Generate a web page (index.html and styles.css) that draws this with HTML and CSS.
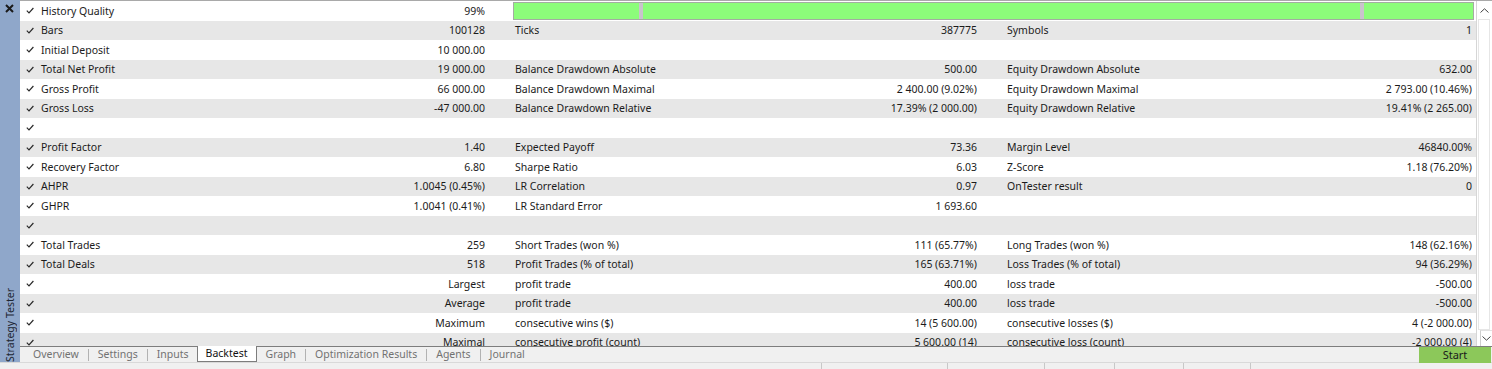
FILE: index.html
```html
<!DOCTYPE html>
<html lang="en">
<head>
    <meta charset="UTF-8">
    <title>Strategy Tester - Backtest</title>
    <link rel="stylesheet" href="styles.css">
</head>
<body>
    <div class="window">
        <div class="sidebar">
            <svg class="close" width="9" height="9" viewBox="0 0 9 9"><path d="M1 1 L8 8 M8 1 L1 8" stroke="#1a1a1a" stroke-width="2"/></svg>
            <span class="side-title">Strategy Tester</span>
        </div>
        <div class="panel">
            <div class="report">
                <div class="table">
                    <div class="row">
                        <span class="check"><svg width="8" height="7" viewBox="0 0 8 7"><path d="M0.8 3.6 L3 5.8 L7.4 1" /></svg></span>
                        <span class="cell"><span>History Quality</span><span>99%</span></span>
                        <span class="quality">
                            <span class="seg" style="width:125px"></span>
                            <span class="gap"></span>
                            <span class="seg" style="width:717px"></span>
                            <span class="gap"></span>
                            <span class="seg fill"></span>
                        </span>
                    </div>
                    <div class="row">
                        <span class="check"><svg width="8" height="7" viewBox="0 0 8 7"><path d="M0.8 3.6 L3 5.8 L7.4 1" /></svg></span>
                        <span class="cell"><span>Bars</span><span>100128</span></span><span></span>
                        <span class="cell"><span>Ticks</span><span>387775</span></span><span></span>
                        <span class="cell"><span>Symbols</span><span>1</span></span>
                    </div>
                    <div class="row">
                        <span class="check"><svg width="8" height="7" viewBox="0 0 8 7"><path d="M0.8 3.6 L3 5.8 L7.4 1" /></svg></span>
                        <span class="cell"><span>Initial Deposit</span><span>10 000.00</span></span><span></span>
                        <span class="cell"></span><span></span>
                        <span class="cell"></span>
                    </div>
                    <div class="row">
                        <span class="check"><svg width="8" height="7" viewBox="0 0 8 7"><path d="M0.8 3.6 L3 5.8 L7.4 1" /></svg></span>
                        <span class="cell"><span>Total Net Profit</span><span>19 000.00</span></span><span></span>
                        <span class="cell"><span>Balance Drawdown Absolute</span><span>500.00</span></span><span></span>
                        <span class="cell"><span>Equity Drawdown Absolute</span><span>632.00</span></span>
                    </div>
                    <div class="row">
                        <span class="check"><svg width="8" height="7" viewBox="0 0 8 7"><path d="M0.8 3.6 L3 5.8 L7.4 1" /></svg></span>
                        <span class="cell"><span>Gross Profit</span><span>66 000.00</span></span><span></span>
                        <span class="cell"><span>Balance Drawdown Maximal</span><span>2 400.00 (9.02%)</span></span><span></span>
                        <span class="cell"><span>Equity Drawdown Maximal</span><span>2 793.00 (10.46%)</span></span>
                    </div>
                    <div class="row">
                        <span class="check"><svg width="8" height="7" viewBox="0 0 8 7"><path d="M0.8 3.6 L3 5.8 L7.4 1" /></svg></span>
                        <span class="cell"><span>Gross Loss</span><span>-47 000.00</span></span><span></span>
                        <span class="cell"><span>Balance Drawdown Relative</span><span>17.39% (2 000.00)</span></span><span></span>
                        <span class="cell"><span>Equity Drawdown Relative</span><span>19.41% (2 265.00)</span></span>
                    </div>
                    <div class="row">
                        <span class="check"><svg width="8" height="7" viewBox="0 0 8 7"><path d="M0.8 3.6 L3 5.8 L7.4 1" /></svg></span>
                    </div>
                    <div class="row">
                        <span class="check"><svg width="8" height="7" viewBox="0 0 8 7"><path d="M0.8 3.6 L3 5.8 L7.4 1" /></svg></span>
                        <span class="cell"><span>Profit Factor</span><span>1.40</span></span><span></span>
                        <span class="cell"><span>Expected Payoff</span><span>73.36</span></span><span></span>
                        <span class="cell"><span>Margin Level</span><span>46840.00%</span></span>
                    </div>
                    <div class="row">
                        <span class="check"><svg width="8" height="7" viewBox="0 0 8 7"><path d="M0.8 3.6 L3 5.8 L7.4 1" /></svg></span>
                        <span class="cell"><span>Recovery Factor</span><span>6.80</span></span><span></span>
                        <span class="cell"><span>Sharpe Ratio</span><span>6.03</span></span><span></span>
                        <span class="cell"><span>Z-Score</span><span>1.18 (76.20%)</span></span>
                    </div>
                    <div class="row">
                        <span class="check"><svg width="8" height="7" viewBox="0 0 8 7"><path d="M0.8 3.6 L3 5.8 L7.4 1" /></svg></span>
                        <span class="cell"><span>AHPR</span><span>1.0045 (0.45%)</span></span><span></span>
                        <span class="cell"><span>LR Correlation</span><span>0.97</span></span><span></span>
                        <span class="cell"><span>OnTester result</span><span>0</span></span>
                    </div>
                    <div class="row">
                        <span class="check"><svg width="8" height="7" viewBox="0 0 8 7"><path d="M0.8 3.6 L3 5.8 L7.4 1" /></svg></span>
                        <span class="cell"><span>GHPR</span><span>1.0041 (0.41%)</span></span><span></span>
                        <span class="cell"><span>LR Standard Error</span><span>1 693.60</span></span><span></span>
                        <span class="cell"></span>
                    </div>
                    <div class="row">
                        <span class="check"><svg width="8" height="7" viewBox="0 0 8 7"><path d="M0.8 3.6 L3 5.8 L7.4 1" /></svg></span>
                    </div>
                    <div class="row">
                        <span class="check"><svg width="8" height="7" viewBox="0 0 8 7"><path d="M0.8 3.6 L3 5.8 L7.4 1" /></svg></span>
                        <span class="cell"><span>Total Trades</span><span>259</span></span><span></span>
                        <span class="cell"><span>Short Trades (won %)</span><span>111 (65.77%)</span></span><span></span>
                        <span class="cell"><span>Long Trades (won %)</span><span>148 (62.16%)</span></span>
                    </div>
                    <div class="row">
                        <span class="check"><svg width="8" height="7" viewBox="0 0 8 7"><path d="M0.8 3.6 L3 5.8 L7.4 1" /></svg></span>
                        <span class="cell"><span>Total Deals</span><span>518</span></span><span></span>
                        <span class="cell"><span>Profit Trades (% of total)</span><span>165 (63.71%)</span></span><span></span>
                        <span class="cell"><span>Loss Trades (% of total)</span><span>94 (36.29%)</span></span>
                    </div>
                    <div class="row">
                        <span class="check"><svg width="8" height="7" viewBox="0 0 8 7"><path d="M0.8 3.6 L3 5.8 L7.4 1" /></svg></span>
                        <span class="cell"><span></span><span>Largest</span></span><span></span>
                        <span class="cell"><span>profit trade</span><span>400.00</span></span><span></span>
                        <span class="cell"><span>loss trade</span><span>-500.00</span></span>
                    </div>
                    <div class="row">
                        <span class="check"><svg width="8" height="7" viewBox="0 0 8 7"><path d="M0.8 3.6 L3 5.8 L7.4 1" /></svg></span>
                        <span class="cell"><span></span><span>Average</span></span><span></span>
                        <span class="cell"><span>profit trade</span><span>400.00</span></span><span></span>
                        <span class="cell"><span>loss trade</span><span>-500.00</span></span>
                    </div>
                    <div class="row">
                        <span class="check"><svg width="8" height="7" viewBox="0 0 8 7"><path d="M0.8 3.6 L3 5.8 L7.4 1" /></svg></span>
                        <span class="cell"><span></span><span>Maximum</span></span><span></span>
                        <span class="cell"><span>consecutive wins ($)</span><span>14 (5 600.00)</span></span><span></span>
                        <span class="cell"><span>consecutive losses ($)</span><span>4 (-2 000.00)</span></span>
                    </div>
                    <div class="row">
                        <span class="check"><svg width="8" height="7" viewBox="0 0 8 7"><path d="M0.8 3.6 L3 5.8 L7.4 1" /></svg></span>
                        <span class="cell"><span></span><span>Maximal</span></span><span></span>
                        <span class="cell"><span>consecutive profit (count)</span><span>5 600.00 (14)</span></span><span></span>
                        <span class="cell"><span>consecutive loss (count)</span><span>-2 000.00 (4)</span></span>
                    </div>
                </div>
                <div class="scrollbar">
                    <span class="arrow"><svg width="9" height="5" viewBox="0 0 9 5"><path d="M0.5 4.5 L4.5 0.8 L8.5 4.5" /></svg></span>
                    <span class="thumb"></span>
                    <span class="arrow down"><svg width="9" height="5" viewBox="0 0 9 5"><path d="M0.5 0.5 L4.5 4.2 L8.5 0.5" /></svg></span>
                </div>
            </div>
            <div class="tabs">
                <span class="tab">Overview</span>
                <span class="sep"></span>
                <span class="tab">Settings</span>
                <span class="sep"></span>
                <span class="tab">Inputs</span>
                <span class="tab active">Backtest</span>
                <span class="tab">Graph</span>
                <span class="sep"></span>
                <span class="tab">Optimization Results</span>
                <span class="sep"></span>
                <span class="tab">Agents</span>
                <span class="sep"></span>
                <span class="tab">Journal</span>
                <button class="start">Start</button>
            </div>
        </div>
    </div>
    <div class="statusbar">
        <span style="width:822px"></span>
        <span style="width:126px"></span>
        <span style="width:97px"></span>
        <span style="width:70px"></span>
        <span style="width:69px"></span>
        <span style="width:67px"></span>
    </div>
</body>
</html>
```

FILE: styles.css
```css
* {
    box-sizing: border-box;
}
body {
    margin: 0;
    width: 1492px;
    height: 369px;
    overflow: hidden;
    background-color: #f0f0f0;
    color: #1b1b1b;
    font-family: "Noto Sans", "DejaVu Sans", sans-serif;
    font-size: 10.5px;
}
.window {
    display: flex;
    height: 362px;
}
.sidebar {
    width: 20px;
    flex-shrink: 0;
    background-color: #8fa7ca;
    display: flex;
    flex-direction: column;
    justify-content: space-between;
    align-items: center;
    padding: 4px 0 0 0;
}
.close {
    margin-left: -1px;
}
.side-title {
    writing-mode: vertical-rl;
    transform: rotate(180deg);
    font-size: 10.5px;
    color: #1d2633;
    line-height: 18px;
}
.panel {
    flex: 1;
    display: flex;
    flex-direction: column;
}
.report {
    height: 346px;
    display: flex;
    border-top: 1px solid #a9a9a9;
    background-color: #ffffff;
}
.table {
    flex: 1;
    overflow: hidden;
}
.row {
    display: grid;
    grid-template-columns: 21px 444px 30px 462px 30px 465px 4px;
    height: 19.5px;
    align-items: center;
    white-space: nowrap;
}
.row:nth-child(even) {
    background-color: #e7e7e7;
}
.check {
    padding-left: 6px;
    display: flex;
}
.check path {
    fill: none;
    stroke: #2a2a2a;
    stroke-width: 1.2;
}
.cell {
    display: flex;
    justify-content: space-between;
}
.quality {
    grid-column: 4 / -1;
    margin-left: -2px;
    margin-right: 2px;
    height: 18px;
    display: flex;
    border: 1px solid #a4aca2;
    background-color: #8cfd7a;
}
.seg {
    background-color: #8cfd7a;
}
.seg.fill {
    flex: 1;
}
.gap {
    width: 4px;
    background-color: #c9c3cc;
}
.scrollbar {
    width: 16px;
    border-left: 1px solid #d6d6d6;
    display: flex;
    flex-direction: column;
    background-color: #ffffff;
}
.arrow {
    height: 18px;
    display: flex;
    align-items: center;
    justify-content: center;
}
.arrow.down {
    height: 16px;
    margin-left: 3px;
    border-left: 1px solid #d0d0d0;
    border-top: 1px solid #e2e2e2;
}
.arrow path {
    fill: none;
    stroke: #444444;
    stroke-width: 1;
}
.thumb {
    flex: 1;
    margin: 0 2px 0 1px;
    border: 1px solid #e6e6e6;
}
.tabs {
    height: 16px;
    display: flex;
    align-items: center;
    border-top: 1px solid #7d7d7d;
    padding-left: 4px;
}
.tab {
    height: 15px;
    line-height: 14px;
    padding: 0 9px 0 9px;
    color: #727272;
}
.sep {
    width: 1px;
    height: 12px;
    background-color: #b2b2b2;
}
.tab.active {
    margin: 0 0 0 -1px;
    padding: 0 8px;
    height: 16px;
    margin-top: -1px;
    background-color: #ffffff;
    border: 1px solid #7d7d7d;
    border-top: none;
    color: #111111;
}
.start {
    margin-left: auto;
    margin-right: 1px;
    width: 72px;
    height: 16px;
    padding: 0;
    border: none;
    background-color: #8cc85a;
    color: #1a1a1a;
    font-family: inherit;
    font-size: 11px;
}
.statusbar {
    height: 7px;
    display: flex;
    border-top: 1px solid #d9d9d9;
}
.statusbar span {
    border-right: 1px solid #c8c8c8;
}
```
